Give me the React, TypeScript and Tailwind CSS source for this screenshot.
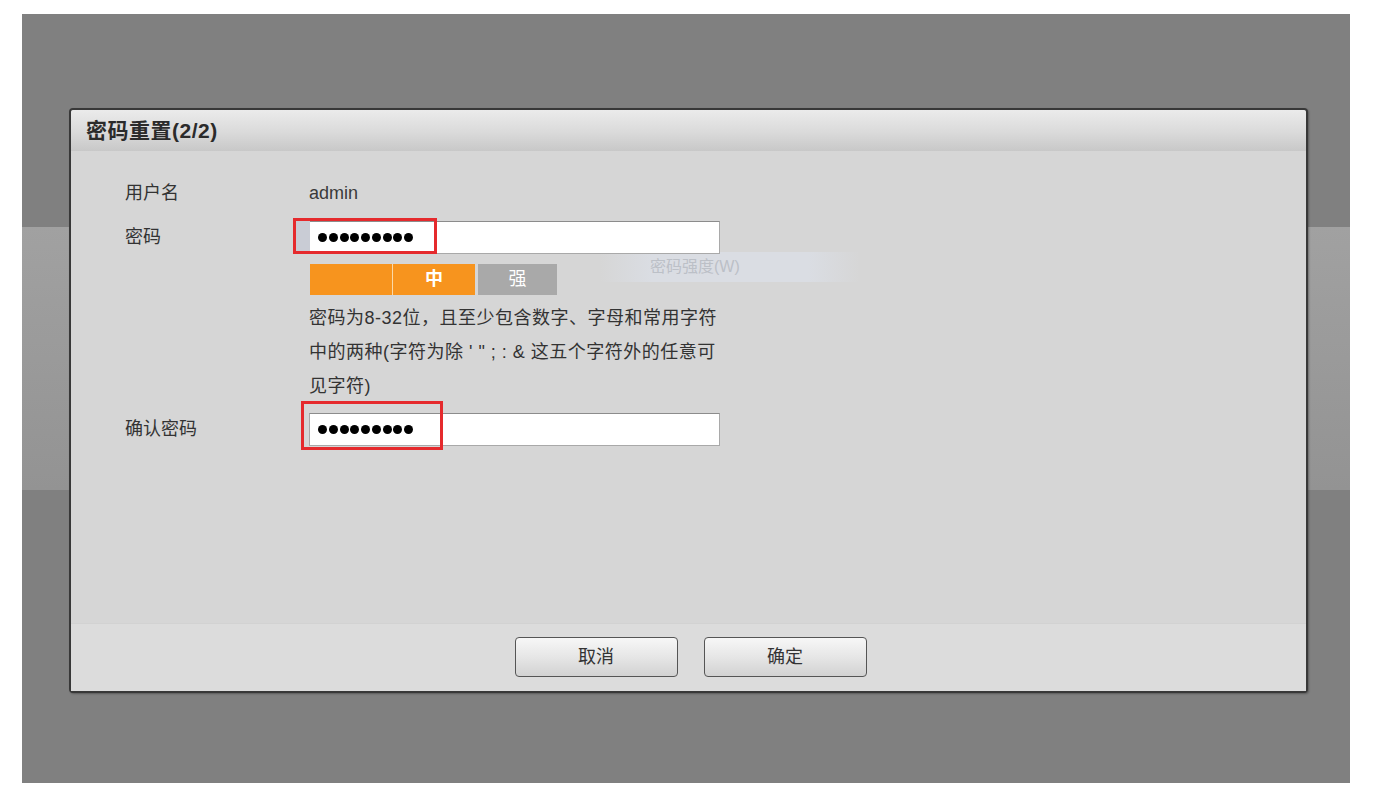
import React from "react";

const cjk = "font-['Liberation_Sans','Noto_Sans_CJK_SC',sans-serif]";

function Dots() {
  return (
    <div className="flex items-center gap-[1.75px]">
      {Array.from({ length: 9 }).map((_, i) => (
        <span key={i} className="block h-[9px] w-[9px] rounded-full bg-black" />
      ))}
    </div>
  );
}

function PasswordInput({ box }: { box: "first" | "second" }) {
  return (
    <div className="relative h-[33px] w-[411px] border border-[#a9a9a9] border-t-[#8c8c8c] bg-white pl-[8px] flex items-center">
      <Dots />
      {box === "first" ? (
        <div className="absolute left-[-17px] top-[-4px] h-[36px] w-[144px] border-[3px] border-[#e52a2d]">
          <div className="h-full w-[14px] bg-[#c9ccd5]" />
        </div>
      ) : (
        <div className="absolute left-[-9px] top-[-13px] h-[49px] w-[142px] border-[3px] border-[#e52a2d]" />
      )}
    </div>
  );
}

export default function App() {
  return (
    <div className={`min-h-[800px] w-[1376px] bg-white pt-[14px] pl-[22px] ${cjk}`}>
      <div className="h-[769px] w-[1328px] pt-[94px] pl-[47px] bg-[linear-gradient(to_bottom,#808080_0px,#808080_213px,#a1a1a1_213px,#939393_476px,#808080_476px,#808080_100%)]">
        {/* Dialog */}
        <div className="flex h-[585px] w-[1239px] flex-col rounded-[4px] border-2 border-[#383838] bg-[#d6d6d6] shadow-[1px_1px_2px_rgba(0,0,0,0.3)]">
          <div className="flex h-[41px] items-center rounded-t-[3px] bg-[linear-gradient(to_bottom,#ebebeb,#dadada_55%,#c8c8c8)] pl-[15px]">
            <span className="text-[21px] font-bold text-[#2b2b2b] tracking-[0.5px]">密码重置(2/2)</span>
          </div>

          <div className="flex-1 pl-[54px] text-[18px] text-[#333333]">
            <div className="mt-[30px] flex h-[24px] items-center">
              <span className="w-[184px]">用户名</span>
              <span className="text-[#3a3a3a]">admin</span>
            </div>

            <div className="mt-[16px] flex items-center">
              <span className="w-[184px]">密码</span>
              <PasswordInput box="first" />
            </div>

            <div className="mt-[10px] ml-[185px] flex items-start">
              <div className="flex h-[31px]">
                <div className="w-[82px] bg-[#f7941e]" />
                <div className="w-[1px] bg-[#fbd9a8]" />
                <div className="flex w-[82px] items-center justify-center bg-[#f7941e] text-[18px] font-bold text-white">中</div>
                <div className="w-[3px]" />
                <div className="flex w-[79px] items-center justify-center bg-[#a9a9a9] text-[18px] text-white">强</div>
              </div>
              <div className="ml-[43px] -mt-[12px] flex h-[30px] w-[260px] items-center bg-[linear-gradient(to_right,rgba(220,224,232,0),#dadde3_20%,#dadde3_80%,rgba(220,224,232,0))] pl-[50px] text-[16px] text-[#bcc0c7]">
                密码强度(W)
              </div>
            </div>

            <div className="mt-[6px] ml-[184px] leading-[34px] tracking-[0.5px] text-[#333333]">
              <div>密码为8-32位，且至少包含数字、字母和常用字符</div>
              <div>中的两种(字符为除 ' " ; : &amp; 这五个字符外的任意可</div>
              <div>见字符)</div>
            </div>

            <div className="mt-[10px] flex items-center">
              <span className="w-[184px]">确认密码</span>
              <PasswordInput box="second" />
            </div>
          </div>

          <div className="flex h-[68px] justify-center gap-[26px] border-t border-[#d2d2d2] bg-[#dcdcdc] pt-[13px] pl-[4px]">
            <button className="h-[40px] w-[163px] rounded-[4px] border border-[#555555] bg-[linear-gradient(to_bottom,#f7f7f7,#e6e6e6_50%,#d2d2d2)] text-[18px] text-[#333333]">
              取消
            </button>
            <button className="h-[40px] w-[163px] rounded-[4px] border border-[#555555] bg-[linear-gradient(to_bottom,#f7f7f7,#e6e6e6_50%,#d2d2d2)] text-[18px] text-[#333333]">
              确定
            </button>
          </div>
        </div>
      </div>
    </div>
  );
}
